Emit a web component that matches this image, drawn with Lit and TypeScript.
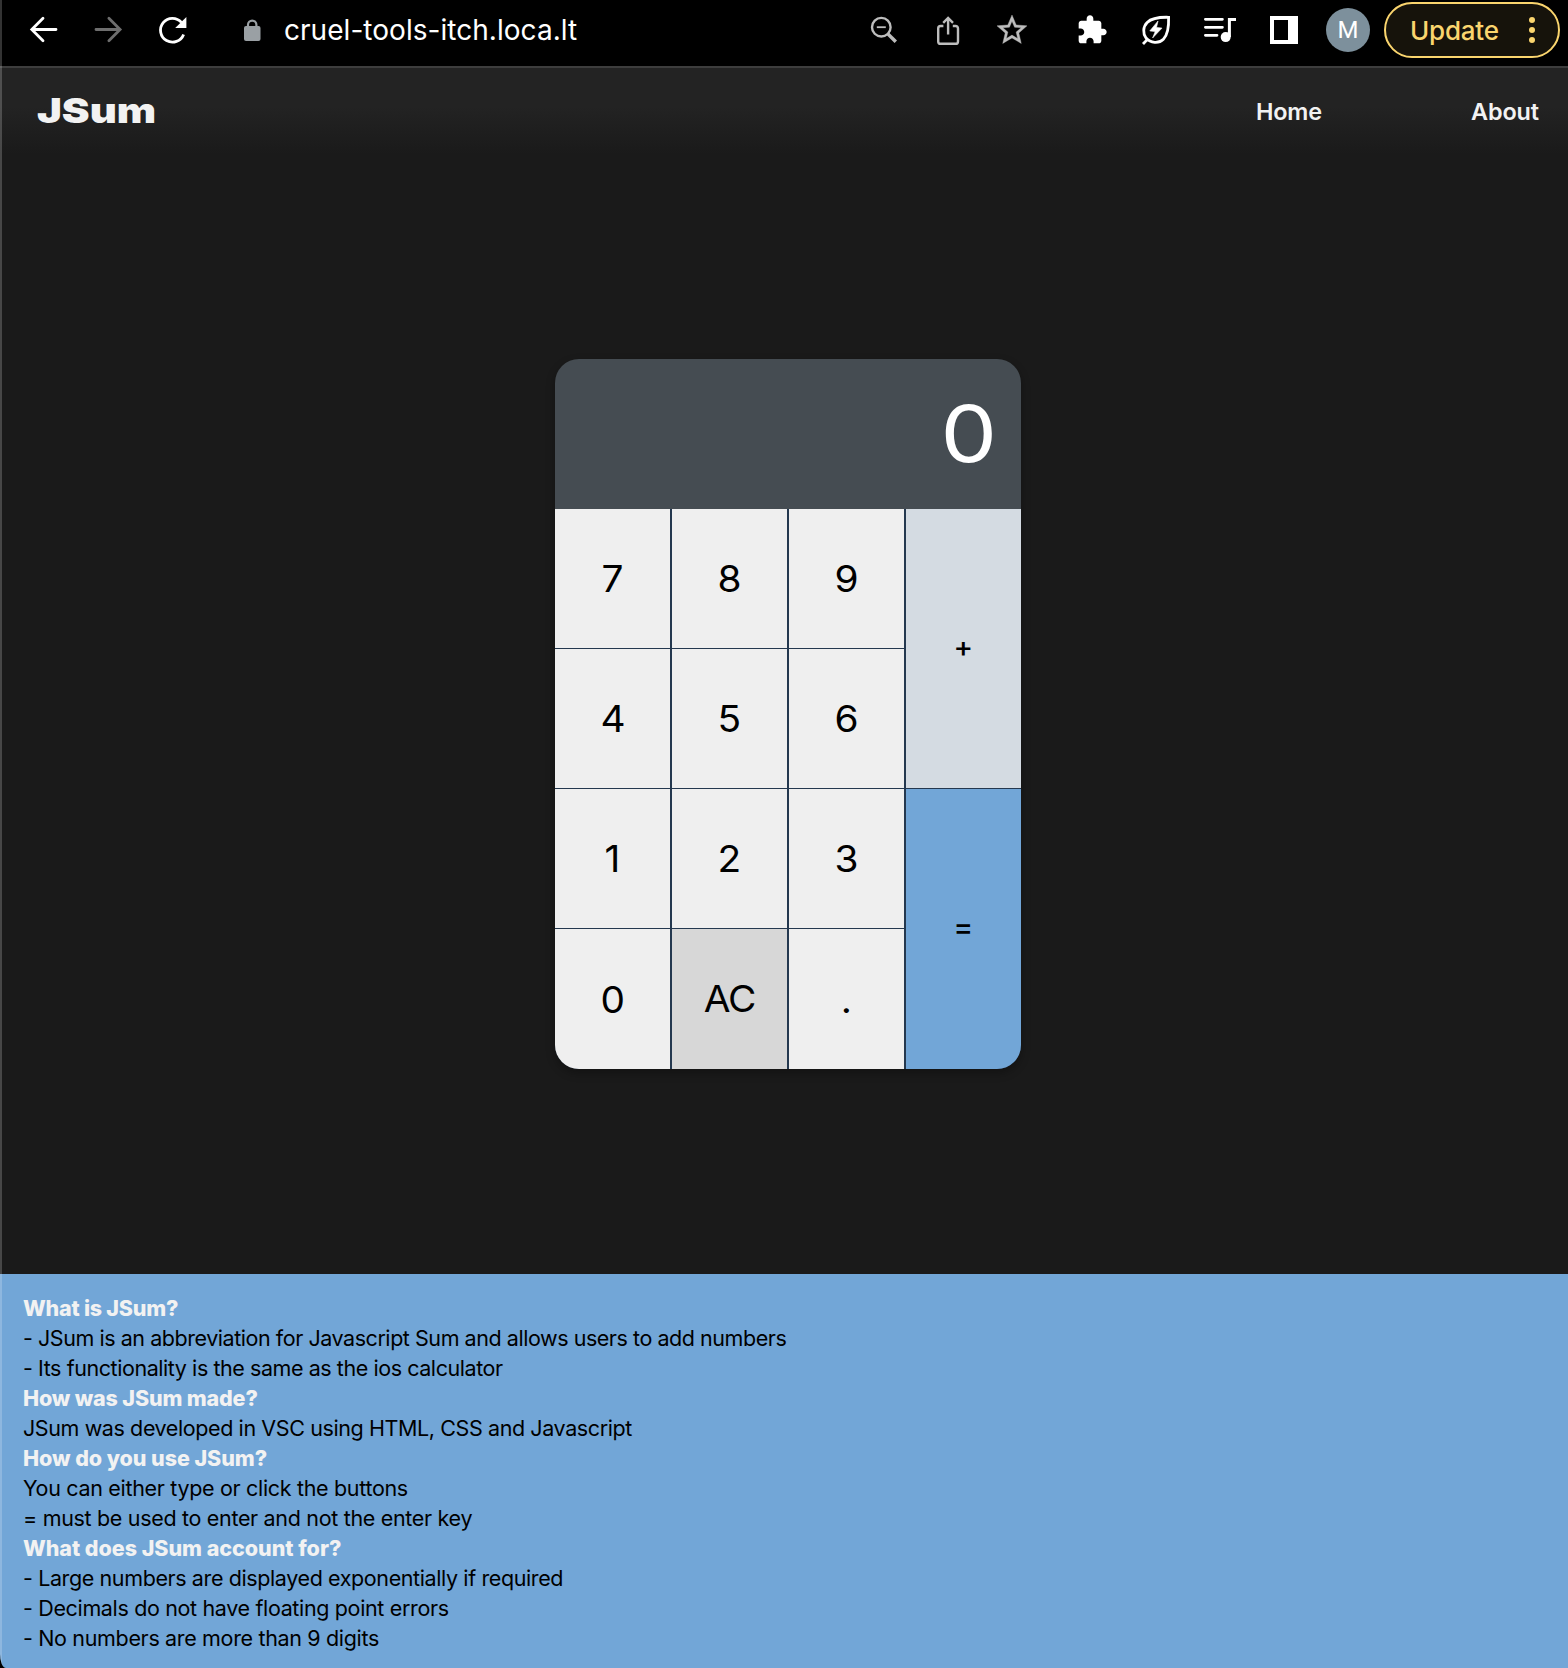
import { LitElement, html, css, svg } from "lit";
import { customElement, state } from "lit/decorators.js";
import { classMap } from "lit/directives/class-map.js";

interface Line {
  text: string;
  heading?: boolean;
  spacing: number;
}

const LINES: Line[] = [
  { text: "What is JSum?", heading: true, spacing: -0.22 },
  { text: "- JSum is an abbreviation for Javascript Sum and allows users to add numbers", spacing: -0.45 },
  { text: "- Its functionality is the same as the ios calculator", spacing: -0.435 },
  { text: "How was JSum made?", heading: true, spacing: -0.15 },
  { text: "JSum was developed in VSC using HTML, CSS and Javascript", spacing: -0.4 },
  { text: "How do you use JSum?", heading: true, spacing: -0.06 },
  { text: "You can either type or click the buttons", spacing: -0.32 },
  { text: "= must be used to enter and not the enter key", spacing: -0.32 },
  { text: "What does JSum account for?", heading: true, spacing: -0.03 },
  { text: "- Large numbers are displayed exponentially if required", spacing: -0.39 },
  { text: "- Decimals do not have floating point errors", spacing: -0.35 },
  { text: "- No numbers are more than 9 digits", spacing: -0.34 },
];

const icon = (body: unknown, size = 32) => html`
  <svg width=${size} height=${size} viewBox="0 0 32 32" fill="none" stroke="currentColor">${body}</svg>
`;

const ICONS = {
  back: svg`<path stroke-width="2.8" stroke-linecap="round" d="M28 15.5H4.400M15 4.200 3.800 15.500l11.200 11.300"/>`,
  forward: svg`<path stroke-width="2.8" stroke-linecap="round" d="M4 15.500h24M16.900 4.200l11.200 11.300-11.200 11.300"/>`,
  reload: svg`<path stroke-width="2.8" d="M27.600 20.400A11.900 11.900 0 1 1 25.400 8.400"/>
    <path stroke="none" fill="currentColor" d="M30.400 3v11H19.200z"/>`,
  lock: svg`<path stroke-width="2.2" d="M12 14v-3.200a4.200 4.200 0 0 1 8.400 0V14"/>
    <rect stroke="none" fill="currentColor" x="8" y="12" width="16.500" height="15" rx="2"/>`,
  zoom: svg`<circle cx="13.300" cy="13.200" r="9.300" stroke-width="2.400"/><path stroke-width="1.800" d="M8.800 13.200h9"/>
    <path stroke-width="3.400" d="m20 20 7.800 7.800"/>`,
  share: svg`<path stroke-width="2.400" d="M11.400 12H8.600A2.400 2.400 0 0 0 6.200 14.400v13a2.400 2.400 0 0 0 2.400 2.400h15a2.400 2.400 0 0 0 2.400-2.400v-13a2.400 2.400 0 0 0-2.400-2.400h-2.800M16.100 20.400V4.200M11.200 8.900l4.900-4.900L21 8.900"/>`,
  puzzle: svg`<path transform="scale(1.3333)" stroke="none" fill="currentColor" d="M20.5 11H19V7c0-1.1-.9-2-2-2h-4V3.5C13 2.12 11.88 1 10.5 1S8 2.12 8 3.5V5H4c-1.1 0-1.99.9-1.99 2v3.8H3.5c1.49 0 2.7 1.21 2.7 2.7s-1.21 2.7-2.7 2.7H2V20c0 1.1.9 2 2 2h3.8v-1.5c0-1.49 1.21-2.7 2.7-2.7 1.49 0 2.7 1.21 2.7 2.7V22H17c1.1 0 2-.9 2-2v-4h1.5c1.38 0 2.5-1.12 2.5-2.5S21.88 11 20.5 11z"/>`,
  star: svg`<path transform="scale(1.3333)" stroke="currentColor" stroke-width=".25" fill="currentColor" fill-rule="evenodd" d="M22 9.24l-7.19-.62L12 2 9.19 8.63 2 9.24l5.46 4.73L5.82 21 12 17.27 18.18 21l-1.63-7.03L22 9.24zM12 15.4l-3.76 2.27 1-4.28-3.32-2.88 4.38-.38L12 6.1l1.71 4.04 4.38.38-3.32 2.88 1 4.28L12 15.4z"/>`,
  leaf: svg`<path stroke-width="2.8" d="M28.600 3.300C17 3 11 4.600 7.200 8.400c-4.300 4.300-4.500 11-1.200 15.600 4.600 5.200 12.800 5.800 17.400 1.200 4.400-4.400 5.600-10.400 5.200-21.900zM3 30l5.200-5.400"/>
    <path stroke-width=".6" fill="currentColor" stroke-linejoin="round" d="M18 7 9.800 16.900l5.400.6L12.600 24 22 14.100l-5.500-.6z"/>`,
  music: svg`<path stroke-width="2.8" stroke-linecap="round" d="M1.400 5.300h17M1.400 13.300h17M1.400 21.300h11.600"/>
    <circle cx="21.700" cy="23.100" r="5" stroke="none" fill="currentColor"/>
    <path stroke-width="3" d="M25.400 23V5.400H32"/>`,
  panel: svg`<path stroke="none" fill="currentColor" fill-rule="evenodd" d="M2 2h28v28H2zM6 6v20h14V6z"/>`,
};

@customElement("calc-pad")
class CalcPad extends LitElement {
  @state() private entry = "0";
  @state() private total = 0;
  private fresh = true;

  static styles = css`
    :host { display: block; font-family: Inter, "Liberation Sans", sans-serif; }
    .calc {
      width: 466px; height: 710px; border-radius: 24px; overflow: hidden;
      box-shadow: 0 4px 10px rgba(0, 0, 0, 0.3);
      display: flex; flex-direction: column;
    }
    .display {
      height: 150px; box-sizing: border-box; padding: 0 24px 1px 0; background: #454c52; color: #fff;
      display: flex; align-items: center; justify-content: flex-end; font-size: 78px; font-weight: 380;
    }
    .value { transform: scaleX(1.15); transform-origin: right center; }
    .keys {
      flex: 1; display: grid; background: #24384f; column-gap: 2px; row-gap: 1px;
      grid-template-columns: repeat(4, 115px); grid-template-rows: 139px 139px 139px 140px;
    }
    .key {
      border: 0; padding: 0; margin: 0; background: #efefef; color: #000;
      font-family: inherit; font-size: 37px; font-weight: 370;
    }
    .glyph { display: inline-block; transform: scaleX(1.05); }
    .clear { background: #d7d7d7; letter-spacing: -1.2px; padding-bottom: 1px; }
    .tall { font-size: 28px; font-weight: 500; padding-bottom: 4px; }
    .plus { background: #d4dbe2; grid-column: 4; grid-row: 1 / span 2; }
    .equals { background: #72a6d7; grid-column: 4; grid-row: 3 / span 2; }
  `;

  private press(key: string) {
    if (key === "AC") {
      this.entry = "0"; this.total = 0; this.fresh = true;
    } else if (key === "+" || key === "=") {
      this.total = Number((this.total + Number(this.entry)).toPrecision(9));
      this.entry = String(this.total);
      if (key === "=") this.total = 0;
      this.fresh = true;
    } else if (this.fresh) {
      this.entry = key === "." ? "0." : key; this.fresh = false;
    } else if (this.entry.length < 9 && !(key === "." && this.entry.includes("."))) {
      this.entry += key;
    }
  }

  render() {
    const keys = ["7", "8", "9", "+", "4", "5", "6", "1", "2", "3", "=", "0", "AC", "."];
    return html`<div class="calc">
      <div class="display"><span class="value">${this.entry}</span></div>
      <div class="keys">
        ${keys.map((k) => html`<button
          class=${classMap({ key: true, clear: k === "AC", tall: k === "+" || k === "=", plus: k === "+", equals: k === "=" })}
          @click=${() => this.press(k)}><span class="glyph">${k}</span></button>`)}
      </div>
    </div>`;
  }
}

@customElement("app-root")
class AppRoot extends LitElement {
  static styles = css`
    :host { display: block; background: #000; font-family: Inter, "Liberation Sans", sans-serif; }
    .window {
      position: relative; width: 1568px; height: 1668px; overflow: hidden; background: #1a1a1a;
      border-bottom-left-radius: 6px 14px; display: flex; flex-direction: column;
    }
    .edge { position: absolute; left: 0; top: 0; bottom: 0; width: 2px; background: rgba(255, 255, 255, 0.2); }
    svg { display: block; flex: none; }
    .toolbar {
      box-sizing: border-box; height: 68px; flex: none; background: #000; border-bottom: 2px solid #3d3d3d;
      padding: 2px 8px 8px 28px; display: flex; align-items: center; color: #fff;
    }
    .nav { display: flex; gap: 32px; }
    .dim { color: #6e6e6e; }
    .lock { color: #9aa0a4; margin-left: 48px; }
    .url { margin-left: 16px; font-size: 28px; line-height: 34px; letter-spacing: 0.04px; font-weight: 440; flex: 1; }
    .actions { display: flex; align-items: center; gap: 32px; color: #bdbdbd; margin-right: 48px; }
    .star { margin: 0 -2px; }
    .extensions { display: flex; align-items: center; gap: 32px; }
    .avatar {
      width: 44px; height: 44px; border-radius: 50%; background: #7d909c; margin: 0 14px 0 26px;
      display: flex; align-items: center; justify-content: center; font: 400 24px Roboto, sans-serif;
    }
    .update {
      box-sizing: border-box; width: 176px; height: 56px; border: 2px solid #fad56e; border-radius: 28px;
      background: #16130b; color: #fad56e; padding: 0 23px 0 24px; font-size: 26px; font-weight: 470;
      letter-spacing: -0.2px; display: flex; align-items: center; justify-content: space-between;
    }
    .dots { display: flex; flex-direction: column; gap: 4px; }
    .dot { width: 6px; height: 6px; border-radius: 50%; background: currentColor; }
    .header {
      height: 86px; flex: none; box-sizing: border-box; padding: 0 29px 0 37px; color: #f2f2f2;
      background: linear-gradient(#232323 45%, #1a1a1a); display: flex; align-items: center;
    }
    .brand {
      font-size: 34.5px; font-weight: 900; transform: scaleX(1.21); transform-origin: left center;
      margin-right: auto; padding-bottom: 1px;
    }
    .links { display: flex; gap: 149px; font-size: 23.4px; font-weight: 560; letter-spacing: -0.1px; }
    .main { flex: 1; padding: 205px 0 0 555px; }
    .about {
      height: 394px; flex: none; box-sizing: border-box; background: #72a6d7; color: #000;
      padding: 19px 23px; font-size: 21.5px; line-height: 30px;
    }
    .line { margin: 0; white-space: nowrap; font-size: inherit; font-weight: 380; }
    .heading { font-weight: 780; color: #f2f2f2; }
  `;

  render() {
    return html`<div class="window">
      <div class="toolbar">
        <div class="nav">
          ${icon(ICONS.back)}
          <span class="dim">${icon(ICONS.forward)}</span>
          ${icon(ICONS.reload)}
        </div>
        <span class="lock">${icon(ICONS.lock)}</span>
        <span class="url">cruel-tools-itch.loca.lt</span>
        <div class="actions">
          ${icon(ICONS.zoom)}
          ${icon(ICONS.share)}
          <span class="star">${icon(ICONS.star, 36)}</span>
        </div>
        <div class="extensions">
          ${icon(ICONS.puzzle)}${icon(ICONS.leaf)}${icon(ICONS.music)}${icon(ICONS.panel)}
        </div>
        <span class="avatar">M</span>
        <div class="update">Update
          <span class="dots"><i class="dot"></i><i class="dot"></i><i class="dot"></i></span>
        </div>
      </div>
      <header class="header">
        <span class="brand">JSum</span>
        <nav class="links"><span>Home</span><span>About</span></nav>
      </header>
      <main class="main"><calc-pad></calc-pad></main>
      <section class="about">
        ${LINES.map((l) => html`<p class=${classMap({ line: true, heading: !!l.heading })}
          style="letter-spacing:${l.spacing}px">${l.text}</p>`)}
      </section>
      <div class="edge"></div>
    </div>`;
  }
}
